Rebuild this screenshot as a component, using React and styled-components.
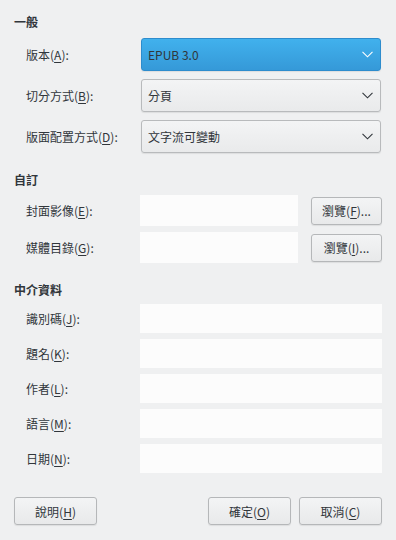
import React from "react";
import styled, { createGlobalStyle } from "styled-components";

const Global = createGlobalStyle`
  html, body { margin: 0; padding: 0; background: #eff0f1; }
  body {
    font-family: "Noto Sans CJK TC", "Noto Sans", sans-serif;
    font-size: 12px;
    color: #31363b;
  }
`;

const Page = styled.div`
  width: 396px;
  height: 540px;
  box-sizing: border-box;
  padding: 14px 14px 0 14px;
  display: flex;
  flex-direction: column;
`;

const Header = styled.div`
  height: 16px;
  line-height: 16px;
  font-weight: bold;
  margin-top: ${(p) => p.$top || 0}px;
  margin-bottom: ${(p) => p.$bottom || 0}px;
`;

const Rows = styled.div`
  display: flex;
  flex-direction: column;
  gap: ${(p) => p.$gap}px;
`;

const Row = styled.div`
  display: grid;
  grid-template-columns: 114px 1fr ${(p) => (p.$button ? "84px" : "")};
  align-items: center;
  height: ${(p) => p.$h}px;
  padding-left: 12px;
`;

const Label = styled.div`
  white-space: nowrap;
  line-height: 16px;
`;

const Combo = styled.div`
  height: 33px;
  box-sizing: border-box;
  margin-left: 1px;
  margin-right: 1px;
  border-radius: 3px;
  border: 1px solid ${(p) => (p.$active ? "#2d8ccd" : "#b8babc")};
  background: ${(p) =>
    p.$active
      ? "linear-gradient(#41b1ed, #3599d8)"
      : "linear-gradient(#f3f4f5, #e9eaeb)"};
  box-shadow: 0 1px 1px rgba(0, 0, 0, 0.08);
  display: flex;
  align-items: center;
  justify-content: space-between;
  padding: 0 7px 0 6px;
`;

const Chevron = ({ color }) => (
  <svg width="11" height="7" viewBox="0 0 11 7">
    <path d="M0.5 0.8 L5.5 5.8 L10.5 0.8" fill="none" stroke={color} strokeWidth="1.1" />
  </svg>
);

const Edit = styled.div`
  height: ${(p) => p.$h}px;
  background: #fcfcfc;
`;

const Button = styled.div`
  box-sizing: border-box;
  height: ${(p) => p.$h || 28}px;
  width: ${(p) => p.$w}px;
  border: 1px solid #b5b7b9;
  border-radius: 3px;
  background: linear-gradient(#f3f4f5, #e8e9ea);
  box-shadow: 0 1px 1px rgba(0, 0, 0, 0.08);
  display: flex;
  align-items: center;
  justify-content: center;
  white-space: nowrap;
`;

const BrowseCell = styled.div`
  display: flex;
  justify-content: flex-end;
`;

const Footer = styled.div`
  margin-top: 24px;
  display: flex;
  align-items: center;
  gap: 8px;
`;

const Spacer = styled.div`
  flex: 1;
`;

const M = styled.span`
  text-decoration: underline;
  text-underline-offset: 2px;
`;

const comboRows = [
  { label: "版本", key: "A", value: "EPUB 3.0", active: true },
  { label: "切分方式", key: "B", value: "分頁" },
  { label: "版面配置方式", key: "D", value: "文字流可變動" },
];

const customRows = [
  { label: "封面影像", key: "E", bkey: "F" },
  { label: "媒體目錄", key: "G", bkey: "I" },
];

const metaRows = [
  { label: "識別碼", key: "J" },
  { label: "題名", key: "K" },
  { label: "作者", key: "L" },
  { label: "語言", key: "M" },
  { label: "日期", key: "N" },
];

export default function App() {
  return (
    <>
      <Global />
      <Page>
        <Header $bottom={8}>一般</Header>
        <Rows $gap={8}>
          {comboRows.map((r) => (
            <Row key={r.key} $h={33}>
              <Label>
                {r.label}(<M>{r.key}</M>):
              </Label>
              <Combo $active={r.active}>
                <span>{r.value}</span>
                <Chevron color={r.active ? "#ffffff" : "#31363b"} />
              </Combo>
            </Row>
          ))}
        </Rows>
        <Header $top={19} $bottom={7}>自訂</Header>
        <Rows $gap={6}>
          {customRows.map((r) => (
            <Row key={r.key} $h={31} $button>
              <Label>
                {r.label}(<M>{r.key}</M>):
              </Label>
              <Edit $h={31} />
              <BrowseCell>
                <Button $w={71} $h={28}>
                  瀏覽(<M>{r.bkey}</M>)...
                </Button>
              </BrowseCell>
            </Row>
          ))}
        </Rows>
        <Header $top={19} $bottom={6}>中介資料</Header>
        <Rows $gap={6}>
          {metaRows.map((r) => (
            <Row key={r.key} $h={29}>
              <Label>
                {r.label}(<M>{r.key}</M>):
              </Label>
              <Edit $h={29} />
            </Row>
          ))}
        </Rows>
        <Footer>
          <Button $w={83}>
            說明(<M>H</M>)
          </Button>
          <Spacer />
          <Button $w={83}>
            確定(<M>O</M>)
          </Button>
          <Button $w={83}>
            取消(<M>C</M>)
          </Button>
        </Footer>
      </Page>
    </>
  );
}
